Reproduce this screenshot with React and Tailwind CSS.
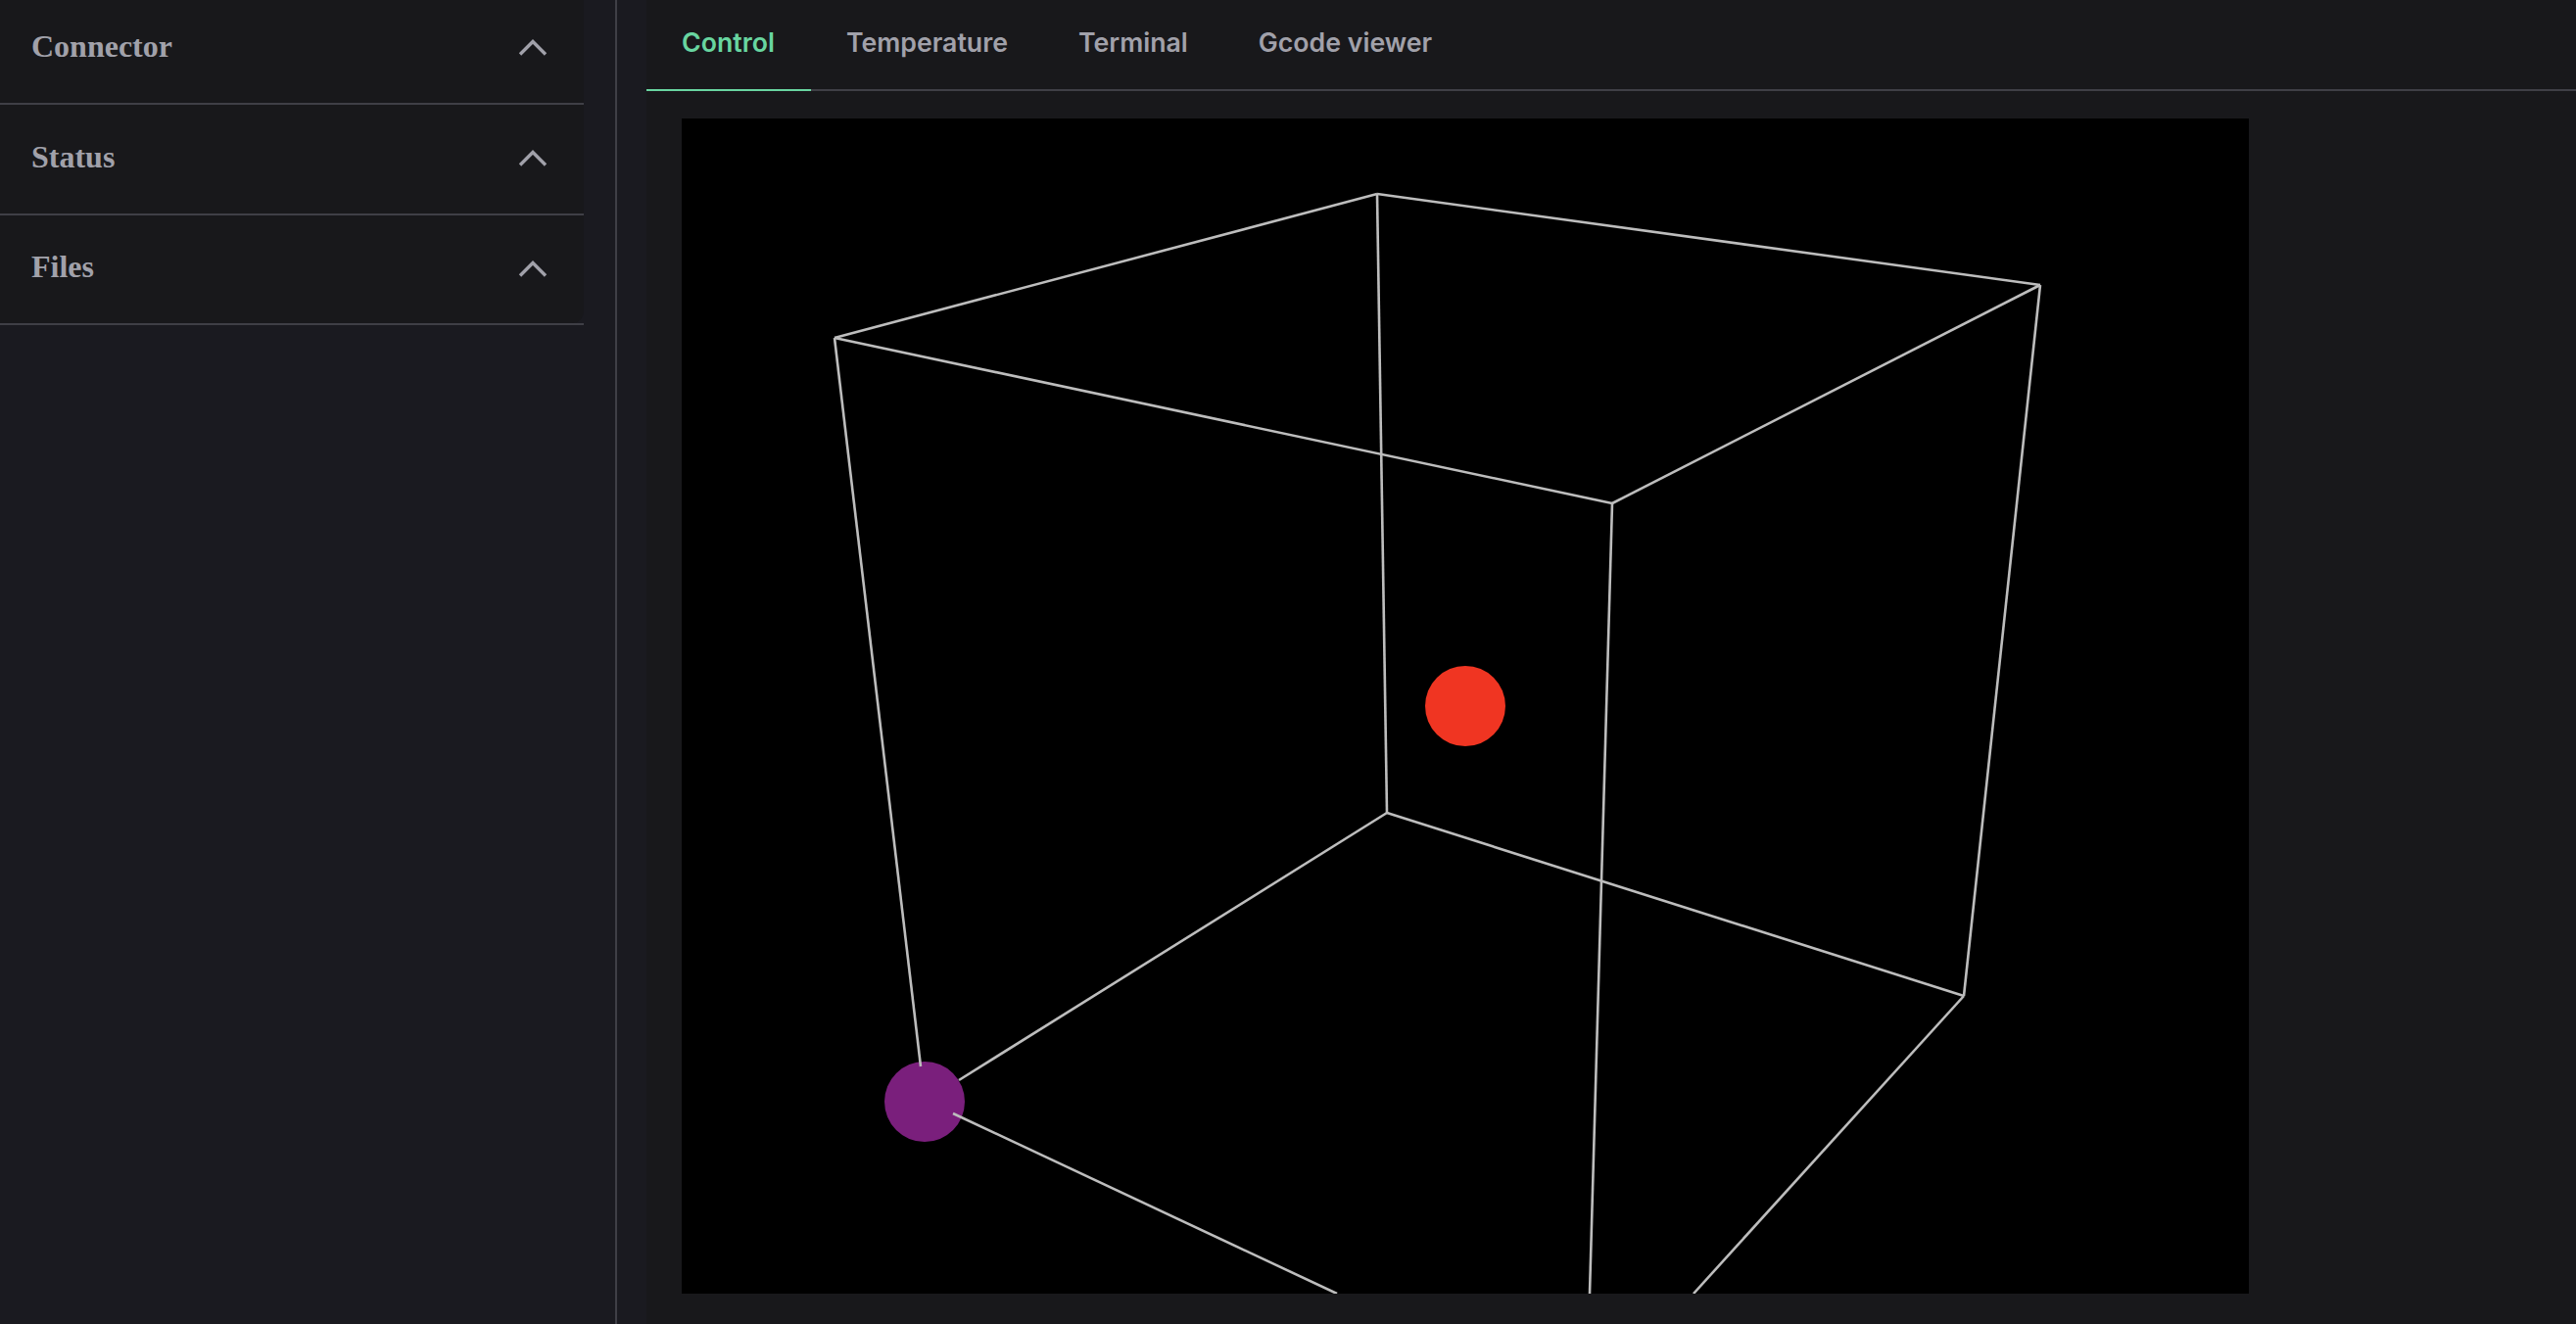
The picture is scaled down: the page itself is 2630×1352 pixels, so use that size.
const sections = [
  { name: "Connector", h: "h-[107px]", cls: "pb-[12px]" },
  { name: "Status", h: "h-[113px]", cls: "pb-[6px]" },
  { name: "Files", h: "h-[112px]", cls: "pb-[6px] rounded-br-[12px]" },
];
const tabs = ["Control", "Temperature", "Terminal", "Gcode viewer"];
const V = {
  A: [156, 224], B: [710, 77], C: [1387, 170], D: [950, 393],
  E: [720, 709], F: [1309, 896],
};
const edges = [
  [V.A, V.B], [V.B, V.C], [V.C, V.D], [V.D, V.A],
  [V.B, V.E], [V.C, V.F], [V.E, V.F],
  [V.A, [244, 968]], [V.E, [283, 982]], [[277, 1016], [669, 1200]],
  [V.D, [927, 1200]], [V.F, [1033, 1200]],
];

function Chevron() {
  return (
    <svg viewBox="0 0 30 18" className="w-[30px] h-[18px] mt-[5px]" fill="none" stroke="#a1a1aa" strokeWidth="3.4">
      <path d="M2 15.5 L15 2.5 L28 15.5" />
    </svg>
  );
}

export default function App() {
  return (
    <div className="flex h-[1352px] w-full overflow-hidden bg-[#1a1a20]">
      <aside className="w-[630px] shrink-0 border-r-2 border-[#3f3f46]">
        <div className="w-[596px]">
          {sections.map((s) => (
            <div key={s.name} className={`border-b-2 border-[#3f3f46] ${s.h}`}>
              <div className={`flex h-full items-center justify-between pl-8 pr-[37px] bg-[#18181b] ${s.cls}`}>
                <span className="font-['Liberation_Serif',serif] font-bold text-[32px] leading-none text-[#a1a1aa]">{s.name}</span>
                <Chevron />
              </div>
            </div>
          ))}
        </div>
      </aside>
      <main className="ml-[30px] flex-1 bg-[#18181b] flex flex-col">
        <nav className="flex h-[93px] shrink-0 border-b-2 border-[#3f3f46]">
          {tabs.map((t, i) => (
            <div
              key={t}
              className={`h-[93px] px-9 pb-[5px] flex items-center font-['Inter',sans-serif] font-semibold text-[26.7px] leading-none border-b-2 ${i === 0 ? "w-[168px] text-[#68d5a0] border-[#68d5a0]" : "text-[#a1a1aa] border-transparent"}`}
            >
              {t}
            </div>
          ))}
        </nav>
        <div className="pt-7 pl-9">
          <svg width="1600" height="1200" viewBox="0 0 1600 1200" className="block bg-black">
            <circle cx="248" cy="1004" r="41" fill="#7a1f7c" />
            <circle cx="800" cy="600" r="41" fill="#f03522" />
            {edges.map(([a, b], i) => (
              <line key={i} x1={a[0]} y1={a[1]} x2={b[0]} y2={b[1]} stroke="#bdbdbd" strokeWidth="2.6" />
            ))}
          </svg>
        </div>
      </main>
    </div>
  );
}
